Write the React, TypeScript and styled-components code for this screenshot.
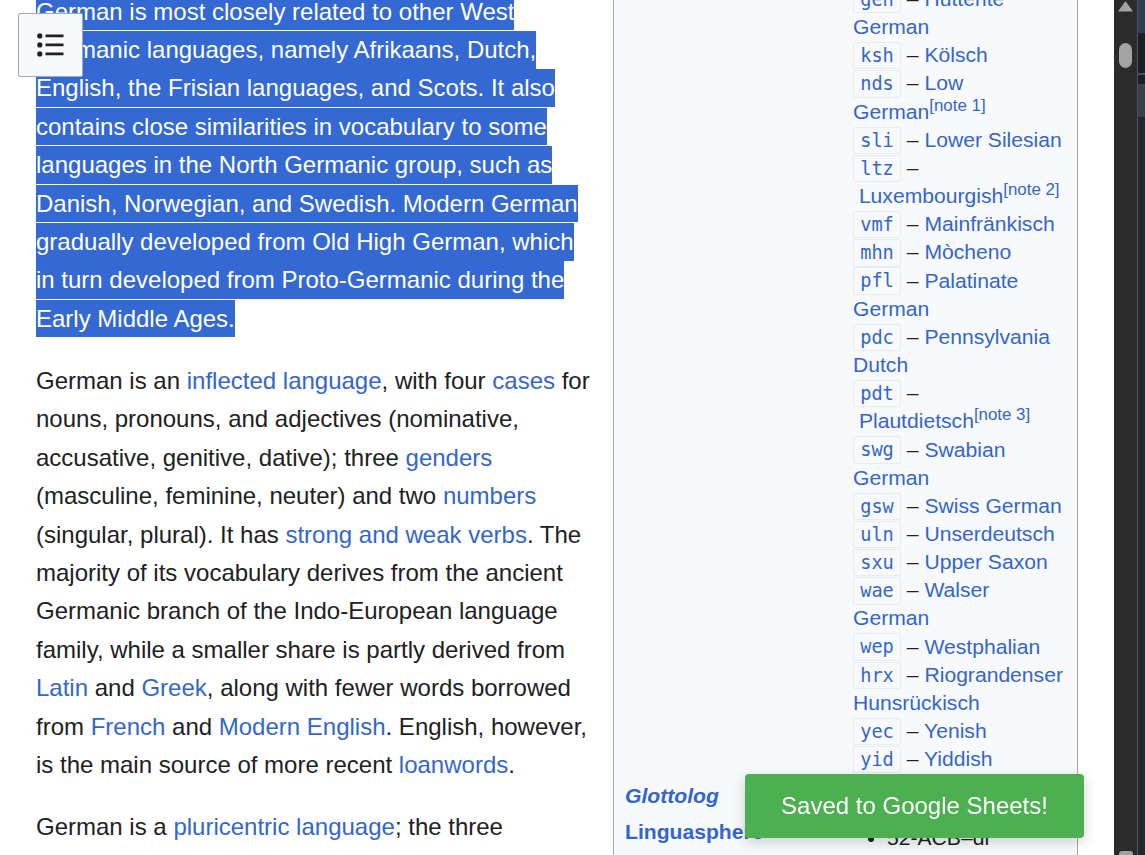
import React from "react";
import styled, { createGlobalStyle } from "styled-components";

type Dialect = { code: string; name: string; note?: string; lead?: boolean };

const dialects: Dialect[] = [
  { code: "cim", name: "Cimbrian" },
  { code: "geh", name: "Hutterite German" },
  { code: "ksh", name: "Kölsch" },
  { code: "nds", name: "Low German", note: "note 1" },
  { code: "sli", name: "Lower Silesian" },
  { code: "ltz", name: "Luxembourgish", note: "note 2", lead: true },
  { code: "vmf", name: "Mainfränkisch" },
  { code: "mhn", name: "Mòcheno" },
  { code: "pfl", name: "Palatinate German" },
  { code: "pdc", name: "Pennsylvania Dutch" },
  { code: "pdt", name: "Plautdietsch", note: "note 3", lead: true },
  { code: "swg", name: "Swabian German" },
  { code: "gsw", name: "Swiss German" },
  { code: "uln", name: "Unserdeutsch" },
  { code: "sxu", name: "Upper Saxon" },
  { code: "wae", name: "Walser German" },
  { code: "wep", name: "Westphalian" },
  { code: "hrx", name: "Riograndenser Hunsrückisch" },
  { code: "yec", name: "Yenish" },
  { code: "yid", name: "Yiddish" },
];

const GlobalStyle = createGlobalStyle`
  html, body { margin: 0; padding: 0; background: #ffffff; overflow: hidden; }
  body { font-family: "Liberation Sans", Arial, sans-serif; color: #202122; }
`;

const Shell = styled.div`
  display: flex;
  width: 1145px;
  height: 855px;
  overflow: hidden;
`;

const Viewport = styled.main`
  flex: 1;
  min-width: 0;
  overflow: hidden;
`;

const ContentRow = styled.div`
  display: flex;
  align-items: flex-start;
  gap: 19px;
  padding-left: 36px;
  margin-top: -48.3px;
`;

const TextColumn = styled.div`
  flex: none;
  width: 558px;
  padding-top: 41.2px;
  font-size: 24px;
  line-height: 38.4px;
`;

const Paragraph = styled.p`
  margin: 0 0 23.5px;
`;

const Highlight = styled.span`
  background: #3468d2;
  color: #ffffff;
  padding: 5.3px 0;
`;

const Link = styled.a`
  color: #3366cc;
  text-decoration: none;
  cursor: pointer;
`;

const Infobox = styled.aside`
  flex: none;
  box-sizing: border-box;
  width: 465px;
  border: 1px solid #a2a9b1;
  background: #f8f9fa;
  padding: 0 10px 0 11px;
  font-size: 21.12px;
  line-height: 28.16px;
  display: grid;
  grid-template-columns: 228px 214px;
`;

const LabelCell = styled.div<{ $italic?: boolean }>`
  padding: 4.1px 0;
  font-weight: bold;
  font-style: ${(p) => (p.$italic ? "italic" : "normal")};
`;

const DataCell = styled.div`
  padding: 4.1px 0;
`;

const DialectLine = styled.div``;

const Code = styled.code`
  font-family: "DejaVu Sans Mono", monospace;
  font-size: 18.6px;
  line-height: 1;
  color: #3366cc;
  background: #f8f9fa;
  border: 1px solid #eaecf0;
  border-radius: 2px;
  padding: 2.2px 6.2px;
`;

const Note = styled.sup`
  font-size: 80%;
  line-height: 1;
  color: #3366cc;
`;

const BulletList = styled.ul`
  margin: 5.6px 0 0 34px;
  padding: 0;
  list-style: disc;
`;

const MenuButton = styled.button`
  position: fixed;
  top: 13px;
  left: 18px;
  width: 65px;
  height: 64px;
  box-sizing: border-box;
  padding: 0;
  border: 1px solid #a2a9b1;
  border-radius: 2px;
  background: #f8f9fa;
  display: flex;
  align-items: center;
  justify-content: center;
  cursor: pointer;
`;

const Toast = styled.div`
  position: fixed;
  right: 61px;
  bottom: 17px;
  width: 339px;
  height: 64px;
  box-sizing: border-box;
  background: #4caf50;
  color: #ffffff;
  border-radius: 4px;
  display: flex;
  align-items: center;
  justify-content: center;
  font-size: 24px;
  box-shadow: 0 4px 14px rgba(0, 0, 0, 0.18);
`;

const ScrollTrack = styled.div`
  flex: none;
  width: 23px;
  height: 855px;
  background: #2b2b2b;
  display: flex;
  flex-direction: column;
  align-items: center;
`;

const ScrollThumb = styled.div`
  width: 13px;
  height: 25px;
  margin-top: 31px;
  border-radius: 6.5px;
  background: #a3a3a3;
`;

const ScrollBottom = styled.div`
  margin-top: auto;
  width: 14px;
  height: 6px;
  margin-bottom: -2px;
  border-radius: 3px;
  background: #a3a3a3;
`;

const EdgePanel = styled.div`
  flex: none;
  width: 8px;
  height: 855px;
  box-sizing: border-box;
  border-left: 1px solid #4b5468;
  background: #23262d;
  display: flex;
  flex-direction: column;
`;

const EdgeBlock = styled.div<{ $h: number; $bg: string }>`
  height: ${(p) => p.$h}px;
  background: ${(p) => p.$bg};
  flex: none;
`;

function ListIcon() {
  return (
    <svg width="27" height="24" viewBox="0 0 27 24" aria-hidden="true">
      <circle cx="2.8" cy="2.9" r="2.6" fill="#202122" />
      <circle cx="2.8" cy="11.9" r="2.6" fill="#202122" />
      <circle cx="2.8" cy="20.9" r="2.6" fill="#202122" />
      <path d="M8.5 2.9H26.5M8.5 11.9H26.5M8.5 20.9H26.5" stroke="#202122" strokeWidth="2.8" />
    </svg>
  );
}

function UpArrow() {
  return (
    <svg width="23" height="12" viewBox="0 0 23 12" aria-hidden="true">
      <path d="M5 11 L11.5 2 L18 11 Z" fill="#a3a3a3" stroke="#a3a3a3" strokeWidth="1.2" strokeLinejoin="round" />
    </svg>
  );
}

export default function App() {
  return (
    <>
      <GlobalStyle />
      <Shell>
        <Viewport>
          <ContentRow>
            <TextColumn>
              <Paragraph>
                <Highlight>
                  German is most closely related to other West Germanic languages, namely Afrikaans, Dutch,
                  English, the Frisian languages, and Scots. It also contains close similarities in vocabulary
                  to some languages in the North Germanic group, such as Danish, Norwegian, and Swedish. Modern
                  German gradually developed from Old High German, which in turn developed from Proto-Germanic
                  during the Early Middle Ages.
                </Highlight>
              </Paragraph>
              <Paragraph>
                German is an <Link>inflected language</Link>, with four <Link>cases</Link> for nouns, pronouns,
                and adjectives (nominative, accusative, genitive, dative); three <Link>genders</Link> (masculine,
                feminine, neuter) and two <Link>numbers</Link> (singular, plural). It has{" "}
                <Link>strong and weak verbs</Link>. The majority of its vocabulary derives from the ancient
                Germanic branch of the Indo-European language family, while a smaller share is partly derived
                from <Link>Latin</Link> and <Link>Greek</Link>, along with fewer words borrowed from{" "}
                <Link>French</Link> and <Link>Modern English</Link>. English, however, is the main source of
                more recent <Link>loanwords</Link>.
              </Paragraph>
              <Paragraph>
                German is a <Link>pluricentric language</Link>; the three standardized variants are German,
                Austrian, and Swiss Standard German.
              </Paragraph>
            </TextColumn>

            <Infobox>
              <LabelCell>Dialects</LabelCell>
              <DataCell>
                {dialects.map((d) => (
                  <DialectLine key={d.code}>
                    <Code>{d.code}</Code>
                    {" – "}
                    {d.lead ? "\u00a0" : null}
                    <Link>{d.name}</Link>
                    {d.note ? <Note>[{d.note}]</Note> : null}
                  </DialectLine>
                ))}
              </DataCell>

              <LabelCell $italic>
                <Link>Glottolog</Link>
              </LabelCell>
              <DataCell>
                <Link>stan1295</Link>
              </DataCell>

              <LabelCell>
                <Link>Linguasphere</Link>
              </LabelCell>
              <DataCell>
                <BulletList>
                  <li>52-ACB–dl</li>
                  <li>52-ACB–dm</li>
                </BulletList>
              </DataCell>
            </Infobox>
          </ContentRow>
        </Viewport>

        <ScrollTrack>
          <UpArrow />
          <ScrollThumb />
          <ScrollBottom />
        </ScrollTrack>

        <EdgePanel>
          <EdgeBlock $h={33} $bg="#2f3b4e" />
          <EdgeBlock $h={40} $bg="#1c1f26" />
          <EdgeBlock $h={2} $bg="#4a5366" />
          <EdgeBlock $h={9} $bg="#1c1f26" />
          <EdgeBlock $h={33} $bg="#3b4048" />
        </EdgePanel>
      </Shell>

      <MenuButton aria-label="Table of contents">
        <ListIcon />
      </MenuButton>

      <Toast>Saved to Google Sheets!</Toast>
    </>
  );
}
